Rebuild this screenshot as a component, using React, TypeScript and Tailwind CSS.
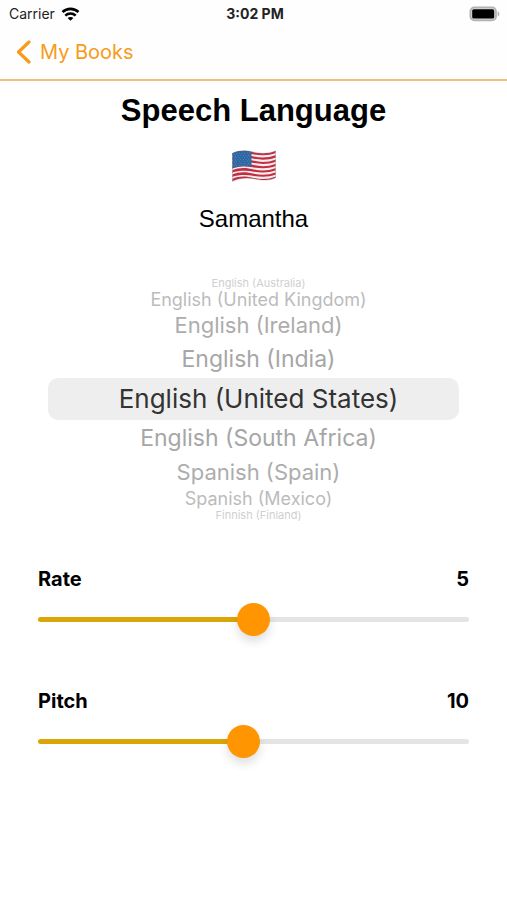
import { useState } from "react";

const languages = [
  { name: "English (Australia)", style: "h-[12px] text-[11px] leading-[12px] text-[#cfcfcf]" },
  { name: "English (United Kingdom)", style: "h-[21px] text-[18px] leading-[21px] text-[#bcbcbc]" },
  { name: "English (Ireland)", style: "h-[31px] text-[22px] leading-[31px] text-[#adadad]" },
  { name: "English (India)", style: "h-[37px] text-[23px] leading-[37px] text-[#a6a6a6]" },
  { name: "English (United States)", style: "h-[42px] text-[26px] leading-[42px] text-[#333333]" },
  { name: "English (South Africa)", style: "h-[37px] text-[23px] leading-[37px] text-[#a6a6a6]" },
  { name: "Spanish (Spain)", style: "h-[31px] text-[22px] leading-[31px] text-[#adadad]" },
  { name: "Spanish (Mexico)", style: "h-[21px] text-[18px] leading-[21px] text-[#bcbcbc]" },
  { name: "Finnish (Finland)", style: "h-[12px] text-[11px] leading-[12px] text-[#cfcfcf]" },
];

function StatusBar() {
  return (
    <div className="grid h-7 grid-cols-3 items-center pl-[9px] pr-[6px] text-[14px] leading-7 text-[#222]">
      <div className="flex items-center gap-[6px]">
        <span>Carrier</span>
        <svg width="19" height="14" viewBox="0 0 18 14" fill="none" stroke="#000" strokeWidth="2.6" aria-label="Wi-Fi">
          <path d="M1 5C5.5.8 12.5.8 17 5" />
          <path d="M3.8 8.6c2.9-2.8 7.5-2.8 10.4 0" />
          <path d="M9 13.8 6.1 11c1.6-1.5 4.2-1.5 5.8 0Z" fill="#000" stroke="none" />
        </svg>
      </div>
      <span className="text-center font-bold">3:02 PM</span>
      <svg className="justify-self-end" width="32" height="16" viewBox="0 0 32 16" aria-label="Battery full">
        <rect x="1.4" y="1.4" width="25.6" height="13" rx="4" fill="#d8d8d8" stroke="#b2b2b2" strokeWidth="1.8" />
        <rect x="3.2" y="3.2" width="22" height="9.4" rx="1.6" fill="#000" />
        <path d="M28.6 5.2c2.4.8 2.4 4.6 0 5.4Z" fill="#b2b2b2" />
      </svg>
    </div>
  );
}

function Flag() {
  const stripes = [0, 1, 2, 3, 4, 5, 6];
  const stars = [0, 1, 2, 3, 4, 5, 6];
  return (
    <svg width="46" height="34" viewBox="0 0 46 34" role="img" aria-label="United States">
      <defs>
        <clipPath id="cloth">
          <path d="M1.5 4.2C9 .8 16 1.5 23 3.2S38 4.8 44.5 1.8V28.8C38 32 30 31.2 23 29.8S8 29 1.5 32.4Z" />
        </clipPath>
      </defs>
      <g clipPath="url(#cloth)">
        <rect width="46" height="34" fill="#f7ecee" />
        {stripes.map((i) => (
          <path
            key={i}
            transform={`translate(0 ${i * 4.3})`}
            d="M0 4.6C8 .5 16 1.5 23 3.2S38 4.8 46 1.4V3.7C38 7 30 6.7 23 5.5S8 3.8 0 6.9Z"
            fill="#c12f43"
          />
        ))}
        <path d="M1 3.5C8 .5 15 1 20.5 2.4V18C14 16.4 8 16.6 1 19.8Z" fill="#2d66a3" />
        {stars.map((r) =>
          stars.map((c) => (
            <circle key={`${r}-${c}`} cx={3.2 + c * 2.6 + (r % 2) * 1.2} cy={5 + r * 2 - c * 0.2} r="0.4" fill="#8fb2d6" />
          )),
        )}
      </g>
      <path
        d="M1.5 4.2C9 .8 16 1.5 23 3.2S38 4.8 44.5 1.8V28.8C38 32 30 31.2 23 29.8S8 29 1.5 32.4Z"
        fill="none"
        stroke="#6b5961"
        strokeOpacity="0.45"
        strokeWidth="0.7"
      />
    </svg>
  );
}

type SettingProps = { id: string; label: string; min: number; max: number; initial: number };

function SliderSetting({ id, label, min, max, initial }: SettingProps) {
  const [value, setValue] = useState(initial);
  const percent = ((value - min) / (max - min)) * 100;
  return (
    <div className="flex flex-col gap-[7px]">
      <div className="flex justify-between text-[20px] leading-8 font-bold text-black">
        <label htmlFor={id}>{label}</label>
        <output htmlFor={id}>{value}</output>
      </div>
      <div className="flex h-[34px] items-center">
        <input
          id={id}
          type="range"
          min={min}
          max={max}
          value={value}
          onChange={(e) => setValue(Number(e.target.value))}
          className="h-[5px] w-full cursor-pointer appearance-none rounded-full [&::-webkit-slider-thumb]:size-[33px] [&::-webkit-slider-thumb]:appearance-none [&::-webkit-slider-thumb]:rounded-full [&::-webkit-slider-thumb]:bg-[#ff9500] [&::-webkit-slider-thumb]:shadow-[0_6px_10px_rgba(0,0,0,0.12)]"
          style={{ background: `linear-gradient(to right, #dba507 ${percent}%, #e4e4e4 ${percent}%)` }}
        />
      </div>
    </div>
  );
}

export default function App() {
  const [selected, setSelected] = useState("English (United States)");
  return (
    <div className="min-h-screen bg-white font-['Inter','Liberation_Sans',sans-serif]">
      <header className="border-b-2 border-[#f3bf78] bg-[#fefefe]">
        <StatusBar />
        <nav className="flex h-[51px] items-center px-4 pb-[3px]">
          <a href="#books" className="flex items-center gap-[9px] text-[20px] leading-7 text-[#f79b1b]">
            <svg width="15" height="24" viewBox="0 0 15 24" fill="none" stroke="currentColor" strokeWidth="3.2" strokeLinecap="round" strokeLinejoin="round" aria-hidden="true">
              <path d="M13 2 2.5 12 13 22" />
            </svg>
            My Books
          </a>
        </nav>
      </header>

      <main>
        <section className="flex flex-col items-center pt-[10px] font-['Liberation_Sans',Arial,sans-serif] text-black">
          <h1 className="text-[31px] leading-[40px] font-bold">Speech Language</h1>
          <div className="pt-[18px]">
            <Flag />
          </div>
          <p className="pt-5 text-[24px] leading-8">Samantha</p>
        </section>

        <div role="listbox" aria-label="Speech language" className="mx-12 mt-[42px] flex flex-col">
          {languages.map(({ name, style }) => (
            <button
              key={name}
              type="button"
              role="option"
              aria-selected={name === selected}
              onClick={() => setSelected(name)}
              className={`w-full rounded-[10px] pl-[10px] text-center whitespace-nowrap aria-selected:bg-[#eeeeee] ${style}`}
            >
              {name}
            </button>
          ))}
        </div>

        <section className="flex flex-col gap-[49px] px-[38px] pt-[42px]">
          <SliderSetting id="rate" label="Rate" min={0} max={10} initial={5} />
          <SliderSetting id="pitch" label="Pitch" min={1} max={20} initial={10} />
        </section>
      </main>
    </div>
  );
}
